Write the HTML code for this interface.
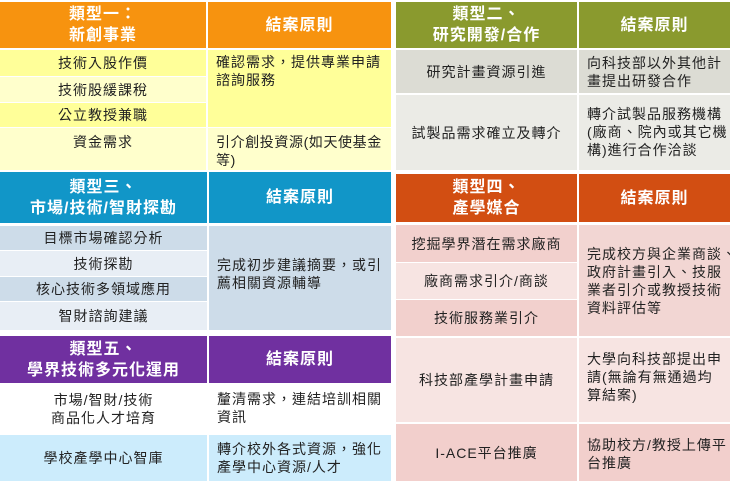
<!DOCTYPE html>
<html><head><meta charset="utf-8"><style>
body{margin:0;width:730px;height:483px;background:#fff;position:relative;overflow:hidden;font-family:"Liberation Sans","Noto Sans CJK TC",sans-serif;font-size:14px;letter-spacing:1px;color:#222}
.c{position:absolute;box-sizing:border-box;display:flex;align-items:center;justify-content:center;text-align:center;line-height:18px}
.l{justify-content:flex-start;align-items:flex-start;text-align:left;padding:3px 6px 3px 8px}
.n{white-space:nowrap;overflow:visible}
.h{color:#fff;font-weight:bold;font-size:16px;line-height:21px;letter-spacing:1px}
</style></head><body>
<!-- type1 -->
<div class="c h" style="left:0;top:2px;width:206px;height:46px;background:#f7930f">類型一：<br>新創事業</div>
<div class="c h" style="left:208px;top:2px;width:183px;height:46px;background:#f7930f">結案原則</div>
<div class="c" style="left:0;top:50px;width:206px;height:26px;background:#ffff99">技術入股作價</div>
<div class="c" style="left:0;top:77px;width:206px;height:25px;background:#ffffcc">技術股緩課稅</div>
<div class="c" style="left:0;top:103px;width:206px;height:24px;background:#ffff99">公立教授兼職</div>
<div class="c" style="left:0;top:128px;width:206px;height:42px;background:#ffffcc;align-items:flex-start;padding-top:5px">資金需求</div>
<div class="c l" style="left:208px;top:50px;width:183px;height:77px;background:#ffff99">確認需求，提供專業申請諮詢服務</div>
<div class="c l n" style="left:208px;top:128px;width:183px;height:42px;background:#ffffcc;padding-top:5px;letter-spacing:0.6px">引介創投資源(如天使基金<br>等)</div>
<!-- type3 -->
<div class="c h" style="left:0;top:172px;width:207px;height:51px;background:#1196c8">類型三、<br>市場/技術/智財探勘</div>
<div class="c h" style="left:209px;top:172px;width:182px;height:51px;background:#1196c8">結案原則</div>
<div class="c" style="left:0;top:226px;width:207px;height:24px;background:#cddce9">目標市場確認分析</div>
<div class="c" style="left:0;top:251px;width:207px;height:25px;background:#e8eef5">技術探勘</div>
<div class="c" style="left:0;top:277px;width:207px;height:24px;background:#cddce9">核心技術多領域應用</div>
<div class="c" style="left:0;top:302px;width:207px;height:28px;background:#e8eef5">智財諮詢建議</div>
<div class="c l" style="left:209px;top:226px;width:182px;height:104px;background:#cddce9;align-items:center;padding-bottom:12px">完成初步建議摘要，或引薦相關資源輔導</div>
<!-- type5 -->
<div class="c h" style="left:0;top:336px;width:207px;height:47px;background:#7030a0">類型五、<br>學界技術多元化運用</div>
<div class="c h" style="left:209px;top:336px;width:182px;height:47px;background:#7030a0">結案原則</div>
<div class="c" style="left:0;top:385px;width:207px;height:48px;background:#fff">市場/智財/技術<br>商品化人才培育</div>
<div class="c l" style="left:209px;top:385px;width:182px;height:48px;background:#fff;padding-top:5px">釐清需求，連結培訓相關資訊</div>
<div class="c" style="left:0;top:435px;width:207px;height:46px;background:#ccecfc">學校產學中心智庫</div>
<div class="c l" style="left:209px;top:435px;width:182px;height:46px;background:#ccecfc;padding-top:5px">轉介校外各式資源，強化產學中心資源/人才</div>
<!-- type2 -->
<div class="c h" style="left:396px;top:2px;width:181px;height:46px;background:#8a9a2e">類型二、<br>研究開發/合作</div>
<div class="c h" style="left:579px;top:2px;width:151px;height:46px;background:#8a9a2e">結案原則</div>
<div class="c" style="left:396px;top:50px;width:181px;height:43px;background:#dcdcd4">研究計畫資源引進</div>
<div class="c l" style="left:579px;top:50px;width:151px;height:43px;background:#dcdcd4;padding-top:4px">向科技部以外其他計畫提出研發合作</div>
<div class="c" style="left:396px;top:95px;width:181px;height:75px;background:#ebebe6">試製品需求確立及轉介</div>
<div class="c l n" style="left:579px;top:95px;width:151px;height:75px;background:#ebebe6;padding-top:10px">轉介試製品服務機構<br>(廠商、院內或其它機<br>構)進行合作洽談</div>
<!-- type4 -->
<div class="c h" style="left:396px;top:174px;width:181px;height:48px;background:#d24e12">類型四、<br>產學媒合</div>
<div class="c h" style="left:579px;top:174px;width:151px;height:48px;background:#d24e12">結案原則</div>
<div class="c" style="left:396px;top:225px;width:181px;height:37px;background:#f2d0cd">挖掘學界潛在需求廠商</div>
<div class="c" style="left:396px;top:263px;width:181px;height:36px;background:#f7e4e2">廠商需求引介/商談</div>
<div class="c" style="left:396px;top:300px;width:181px;height:36px;background:#f2d0cd">技術服務業引介</div>
<div class="c l n" style="left:579px;top:225px;width:151px;height:111px;background:#f2d6d3;padding-top:20px;padding-right:0">完成校方與企業商談、<br>政府計畫引入、技服<br>業者引介或教授技術<br>資料評估等</div>
<div class="c" style="left:396px;top:338px;width:181px;height:84px;background:#f7e4e2">科技部產學計畫申請</div>
<div class="c l n" style="left:579px;top:338px;width:151px;height:84px;background:#f7e4e2;padding-top:12px">大學向科技部提出申<br>請(無論有無通過均<br>算結案)</div>
<div class="c" style="left:396px;top:424px;width:181px;height:57px;background:#f2cfcc">I-ACE平台推廣</div>
<div class="c l n" style="left:579px;top:424px;width:151px;height:57px;background:#f2cfcc;padding-top:12px">協助校方/教授上傳平<br>台推廣</div>
</body></html>
